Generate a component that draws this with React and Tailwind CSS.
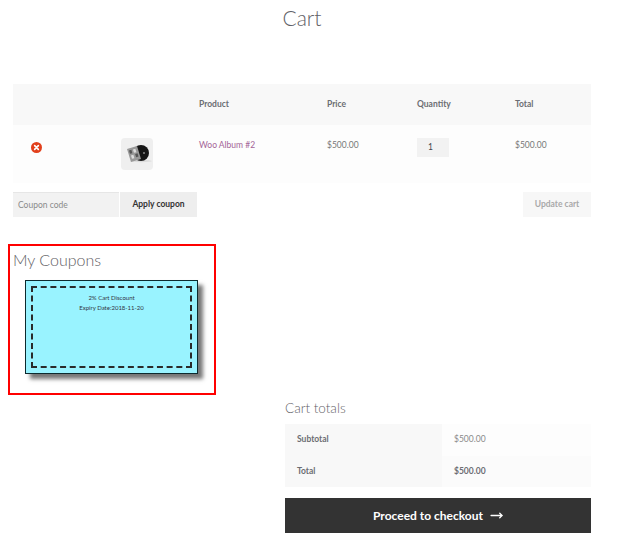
import { MoveRight } from 'lucide-react';

const Album = () => (
    <svg viewBox="0 0 32 32" className="w-8 h-8 rounded-sm bg-[#efefef]">
        <ellipse cx="20" cy="23" rx="11" ry="1.2" fill="#dcdcdc" />
        <circle cx="20" cy="15" r="8" fill="#161616" />
        <circle cx="23" cy="15" r="1" fill="#888888" />
        <polygon points="6,11 16,8 20,21 10,24" fill="#999999" />
        <rect x="8.5" y="12" width="2.5" height="3.5" fill="#555555" transform="rotate(-17 10 14)" />
        <rect x="12.5" y="11" width="2.5" height="3.5" fill="#dddddd" transform="rotate(-17 14 13)" />
        <rect x="10.5" y="17" width="2.5" height="3.5" fill="#dddddd" transform="rotate(-17 12 19)" />
        <rect x="14.5" y="15.5" width="2.5" height="3.5" fill="#555555" transform="rotate(-17 16 17)" />
    </svg>
);

const RemoveIcon = () => (
    <svg viewBox="0 0 12 12" className="w-[11px] h-[11px]">
        <circle cx="6" cy="6" r="6" fill="#e2401c" />
        <path d="M4 4l4 4M8 4l-4 4" stroke="#ffffff" strokeWidth="1.8" strokeLinecap="round" />
    </svg>
);

export default function App() {
    return (
        <div className="w-[630px] h-[560px] bg-white overflow-hidden font-['Lato',sans-serif] text-[#777777] text-[8.5px]">
            <div className="ml-[13px] w-[578px]">
                <h1 className="pt-[2px] h-[84px] text-center text-[21px] leading-[32px] font-light text-[#5f6166]">Cart</h1>

                <div className="h-[41px] pl-[18px] bg-[#f8f8f8] grid grid-cols-[90px_78px_128px_90px_98px_1fr] items-center font-bold text-[#6b6d72]">
                    <span />
                    <span />
                    <span>Product</span>
                    <span>Price</span>
                    <span>Quantity</span>
                    <span>Total</span>
                </div>
                <div className="h-[58px] pl-[18px] pt-[13px] bg-[#fdfdfd] grid grid-cols-[90px_78px_128px_90px_98px_1fr] items-start">
                    <div className="pt-[4px]"><RemoveIcon /></div>
                    <Album />
                    <span className="leading-[14px] text-[#a46497]">Woo Album #2</span>
                    <span className="leading-[14px]">$500.00</span>
                    <div className="w-8 h-[19px] bg-[#f2f2f2] pl-[11px] flex items-center text-[#43454b]">1</div>
                    <span className="leading-[14px]">$500.00</span>
                </div>

                <div className="mt-[9px] h-[25px] flex">
                    <div className="w-[106px] bg-[#f2f2f2] border-t border-[#e6e6e6] pl-[5px] flex items-center text-[#8a8a8a]">Coupon code</div>
                    <button className="ml-px w-[77px] bg-[#eeeeee] font-bold text-[#333333]">Apply coupon</button>
                    <button className="ml-auto w-[68px] bg-[#f7f7f7] font-bold text-[#a9a9a9]">Update cart</button>
                </div>
            </div>

            <section className="mt-[27px] ml-2 w-[208px] h-[151px] border-2 border-[#ff0000] pl-[3px] pt-[2px]">
                <h2 className="text-[16px] leading-[24px] font-light text-[#5f6166]">My Coupons</h2>
                <div className="mt-[8px] ml-[12px] w-[173px] h-[94px] bg-[#99f3ff] border border-[#0d2a2e] p-[5px] shadow-[5px_5px_4px_#777777]">
                    <div className="h-[82px] w-[161px] border-2 border-dashed border-[#2a2a2a] pt-[5px] text-center text-[6px] leading-[10px] text-[#333344]">
                        <p>2% Cart Discount</p>
                        <p>Expiry Date:2018-11-20</p>
                    </div>
                </div>
            </section>

            <div className="ml-[285px] w-[306px]">
                <h2 className="mt-[3px] h-[26px] text-[13.5px] leading-[20px] font-light text-[#5f6166]">Cart totals</h2>
                <div className="grid grid-cols-[157px_149px] h-[63px] bg-[#fdfdfd]">
                    <div className="bg-[#f8f8f8] pl-3 flex items-center font-bold text-[#6b6d72]">Subtotal</div>
                    <div className="pl-3 flex items-center text-[#8a8a8a]">$500.00</div>
                    <div className="bg-[#f8f8f8] pl-3 flex items-center font-bold text-[#6b6d72]">Total</div>
                    <div className="pl-3 flex items-center font-bold text-[#6b6d72] bg-[#fbfbfb]">$500.00</div>
                </div>
                <button className="mt-[11px] w-full h-[35px] bg-[#333333] flex items-center justify-center gap-[7px] text-white text-[12px] font-bold">
                    Proceed to checkout
                    <MoveRight size={13} strokeWidth={2.5} />
                </button>
            </div>
        </div>
    );
}
